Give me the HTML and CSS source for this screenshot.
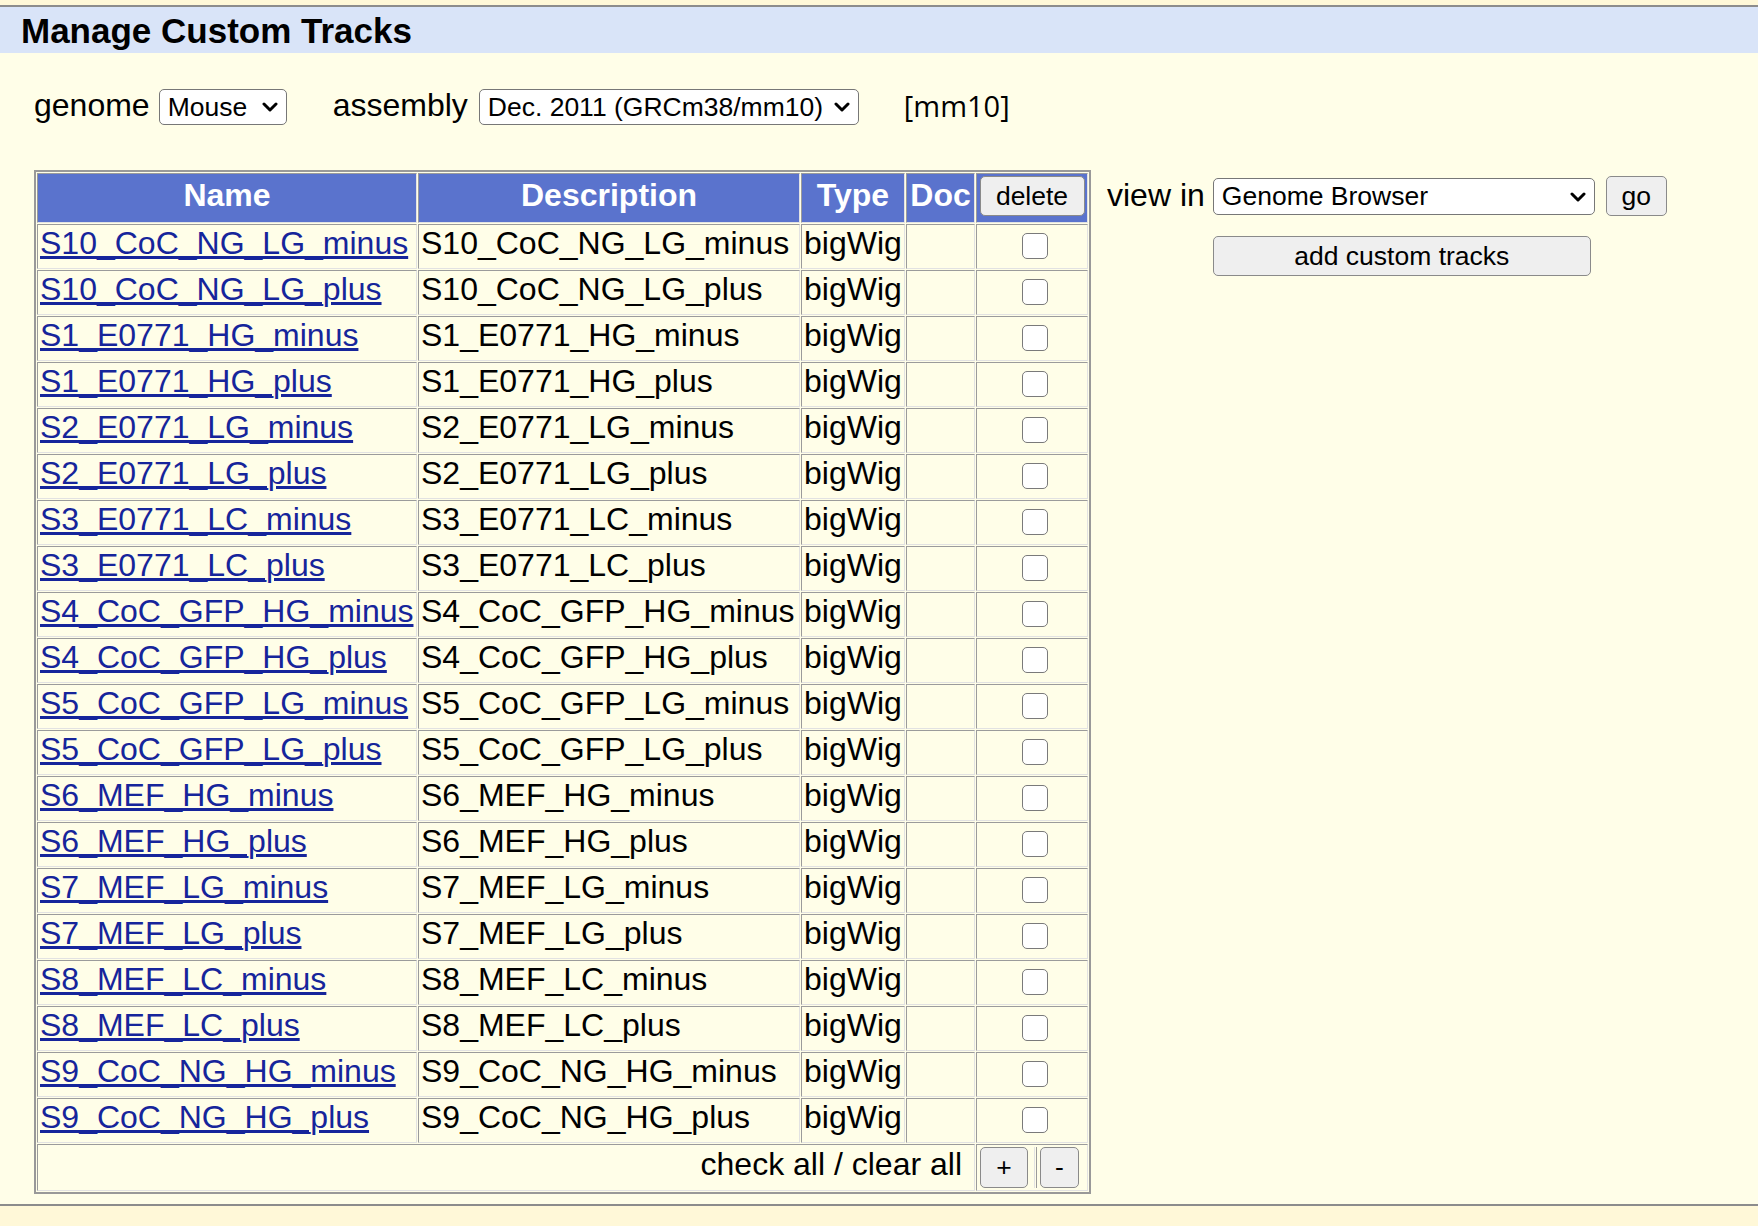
FILE: index.html
```html
<!DOCTYPE html>
<html>
<head>
<meta charset="utf-8">
<title>Manage Custom Tracks</title>
<link rel="stylesheet" href="styles.css">
</head>
<body>
<div class="topstrip"></div>
<div class="titlebar">Manage Custom Tracks</div>
<div class="asm-row">
  <span class="lbl">genome</span>
  <span class="sel sel-genome"><select><option>Mouse</option></select><svg class="chev" viewBox="0 0 16 10"><path d="M2 2 L8 8 L14 2"/></svg></span>
  <span class="lbl lbl-asm">assembly</span>
  <span class="sel sel-asm"><select><option>Dec. 2011 (GRCm38/mm10)</option></select><svg class="chev" viewBox="0 0 16 10"><path d="M2 2 L8 8 L14 2"/></svg></span>
  <span class="lbl db">[mm10]</span>
</div>
<div class="main">
  <table class="tracks">
    <thead>
      <tr>
        <th class="c-name">Name</th>
        <th class="c-desc">Description</th>
        <th class="c-type">Type</th>
        <th class="c-doc">Doc</th>
        <th class="c-del"><button class="btn del">delete</button></th>
      </tr>
    </thead>
    <tbody id="rows">
      <tr><td><a href="#">S10_CoC_NG_LG_minus</a></td><td>S10_CoC_NG_LG_minus</td><td>bigWig</td><td></td><td class="cb"><input type="checkbox"></td></tr>
      <tr><td><a href="#">S10_CoC_NG_LG_plus</a></td><td>S10_CoC_NG_LG_plus</td><td>bigWig</td><td></td><td class="cb"><input type="checkbox"></td></tr>
      <tr><td><a href="#">S1_E0771_HG_minus</a></td><td>S1_E0771_HG_minus</td><td>bigWig</td><td></td><td class="cb"><input type="checkbox"></td></tr>
      <tr><td><a href="#">S1_E0771_HG_plus</a></td><td>S1_E0771_HG_plus</td><td>bigWig</td><td></td><td class="cb"><input type="checkbox"></td></tr>
      <tr><td><a href="#">S2_E0771_LG_minus</a></td><td>S2_E0771_LG_minus</td><td>bigWig</td><td></td><td class="cb"><input type="checkbox"></td></tr>
      <tr><td><a href="#">S2_E0771_LG_plus</a></td><td>S2_E0771_LG_plus</td><td>bigWig</td><td></td><td class="cb"><input type="checkbox"></td></tr>
      <tr><td><a href="#">S3_E0771_LC_minus</a></td><td>S3_E0771_LC_minus</td><td>bigWig</td><td></td><td class="cb"><input type="checkbox"></td></tr>
      <tr><td><a href="#">S3_E0771_LC_plus</a></td><td>S3_E0771_LC_plus</td><td>bigWig</td><td></td><td class="cb"><input type="checkbox"></td></tr>
      <tr><td><a href="#">S4_CoC_GFP_HG_minus</a></td><td>S4_CoC_GFP_HG_minus</td><td>bigWig</td><td></td><td class="cb"><input type="checkbox"></td></tr>
      <tr><td><a href="#">S4_CoC_GFP_HG_plus</a></td><td>S4_CoC_GFP_HG_plus</td><td>bigWig</td><td></td><td class="cb"><input type="checkbox"></td></tr>
      <tr><td><a href="#">S5_CoC_GFP_LG_minus</a></td><td>S5_CoC_GFP_LG_minus</td><td>bigWig</td><td></td><td class="cb"><input type="checkbox"></td></tr>
      <tr><td><a href="#">S5_CoC_GFP_LG_plus</a></td><td>S5_CoC_GFP_LG_plus</td><td>bigWig</td><td></td><td class="cb"><input type="checkbox"></td></tr>
      <tr><td><a href="#">S6_MEF_HG_minus</a></td><td>S6_MEF_HG_minus</td><td>bigWig</td><td></td><td class="cb"><input type="checkbox"></td></tr>
      <tr><td><a href="#">S6_MEF_HG_plus</a></td><td>S6_MEF_HG_plus</td><td>bigWig</td><td></td><td class="cb"><input type="checkbox"></td></tr>
      <tr><td><a href="#">S7_MEF_LG_minus</a></td><td>S7_MEF_LG_minus</td><td>bigWig</td><td></td><td class="cb"><input type="checkbox"></td></tr>
      <tr><td><a href="#">S7_MEF_LG_plus</a></td><td>S7_MEF_LG_plus</td><td>bigWig</td><td></td><td class="cb"><input type="checkbox"></td></tr>
      <tr><td><a href="#">S8_MEF_LC_minus</a></td><td>S8_MEF_LC_minus</td><td>bigWig</td><td></td><td class="cb"><input type="checkbox"></td></tr>
      <tr><td><a href="#">S8_MEF_LC_plus</a></td><td>S8_MEF_LC_plus</td><td>bigWig</td><td></td><td class="cb"><input type="checkbox"></td></tr>
      <tr><td><a href="#">S9_CoC_NG_HG_minus</a></td><td>S9_CoC_NG_HG_minus</td><td>bigWig</td><td></td><td class="cb"><input type="checkbox"></td></tr>
      <tr><td><a href="#">S9_CoC_NG_HG_plus</a></td><td>S9_CoC_NG_HG_plus</td><td>bigWig</td><td></td><td class="cb"><input type="checkbox"></td></tr>
      <tr class="foot">
        <td colspan="4" class="checkall">check all / clear all</td>
        <td class="pm-cell"><div class="pm"><span class="pm-a"><button class="btn plus">+</button></span><span class="pm-b"><button class="btn minus">-</button></span></div></td>
      </tr>
    </tbody>
  </table>
  <div class="side">
    <span class="lbl view-lbl">view in</span>
    <div class="view-ctrls">
      <span class="sel sel-view"><select><option>Genome Browser</option></select><svg class="chev" viewBox="0 0 16 10"><path d="M2 2 L8 8 L14 2"/></svg></span>
      <button class="btn go">go</button>
    </div>
    <span></span>
    <button class="btn add">add custom tracks</button>
  </div>
</div>
<div class="bottom"></div>
</body>
</html>
```

FILE: styles.css
```css
html, body {
  margin: 0;
  padding: 0;
}
body {
  background: #fffee8;
  font-family: "Liberation Sans", Arial, sans-serif;
  font-size: 32px;
  color: #000;
  width: 1758px;
  height: 1226px;
  overflow: hidden;
  position: relative;
}
.topstrip {
  height: 5px;
  background: #fff8d8;
  border-bottom: 2px solid #8c8c8c;
}
.titlebar {
  background: #d9e4f8;
  height: 45px;
  padding: 1px 0 0 21px;
  font-weight: bold;
  font-size: 35px;
  line-height: 45px;
}
.asm-row {
  display: flex;
  align-items: center;
  height: 36px;
  margin-top: 36px;
  padding-left: 34px;
}
.lbl {
  line-height: 37px;
  margin-bottom: 4px;
}
.sel {
  position: relative;
  display: inline-block;
  margin-left: 9px;
}
.sel select {
  appearance: none;
  -webkit-appearance: none;
  display: block;
  box-sizing: border-box;
  height: 36px;
  margin: 0;
  padding: 0 0 0 8px;
  border: 1.5px solid #777;
  border-radius: 5px;
  background: #fff;
  font-family: "Liberation Sans", Arial, sans-serif;
  font-size: 26.5px;
  color: #000;
}
.chev {
  position: absolute;
  right: 9px;
  top: 13px;
  width: 16px;
  height: 10px;
  fill: none;
  stroke: #000;
  stroke-width: 3;
  stroke-linecap: round;
  stroke-linejoin: round;
  pointer-events: none;
}
.sel-genome select { width: 128px; }
.lbl-asm { margin-left: 46px; }
.sel-asm { margin-left: 11px; }
.sel-asm select { width: 380px; }
.db {
  margin-left: 45px;
  font-family: "Open Sans", "Noto Sans", sans-serif;
  font-size: 29px;
}
.main {
  display: flex;
  align-items: flex-start;
  margin-top: 45px;
  padding-left: 34px;
}
.tracks {
  border: 2px solid #999;
  border-spacing: 1px;
  background: #fffee8;
}
.tracks th, .tracks td {
  border: 1px solid;
  border-color: #9b9b9b #e2e2e2 #e2e2e2 #9b9b9b;
  padding: 0 2px 6px 2px;
  line-height: 37px;
  white-space: nowrap;
}
.tracks th {
  background: #5a73cd;
  color: #fff;
  font-weight: bold;
  text-align: center;
  padding: 0 2px 6px 2px;
}
.c-name { width: 374px; }
.c-desc { width: 376px; }
.c-type { width: 98px; }
.c-doc { width: 63px; }
.c-del { width: 106px; }
.tracks a {
  color: #16259b;
  text-decoration: underline;
}
.btn {
  font-family: "Liberation Sans", Arial, sans-serif;
  font-size: 26.5px;
  color: #000;
  background: #efefef;
  border: 1.5px solid #8a8a8a;
  border-radius: 5px;
  box-sizing: border-box;
  margin: 0;
  padding: 0;
}
.del {
  width: 105px;
  height: 40px;
  display: block;
  margin: 2px auto 0;
}
.cb {
  text-align: center;
}
.cb input {
  appearance: none;
  -webkit-appearance: none;
  width: 26px;
  height: 26px;
  margin: 8px 0 0 5px;
  vertical-align: top;
  background: #fff;
  border: 1.5px solid #7a7a7a;
  border-radius: 5px;
  box-sizing: border-box;
}
.checkall {
  text-align: right;
  padding-right: 12px !important;
}
.pm-cell {
  padding: 2px 2px 2px 2px !important;
}
.pm {
  display: flex;
  align-items: center;
}
.pm-a {
  padding: 0 6px 0 1px;
  border-right: 1px solid #e2e2e2;
}
.pm-b {
  padding: 0 0 0 3px;
  border-left: 1px solid #9b9b9b;
  margin-left: 1px;
}
.plus { width: 48px; height: 41px; display: block; }
.minus { width: 39px; height: 41px; display: block; }
.side {
  display: grid;
  grid-template-columns: auto auto;
  column-gap: 8px;
  row-gap: 20px;
  align-items: center;
  margin-left: 16px;
  margin-top: 6px;
}
.side .lbl { margin-bottom: 2px; }
.view-ctrls {
  display: flex;
  align-items: center;
}
.view-ctrls .sel { margin-left: 0; }
.sel-view select { width: 382px; height: 37px; }
.sel-view .chev { top: 14px; }
.go {
  width: 61px;
  height: 40px;
  margin-left: 11px;
}
.add {
  width: 378px;
  height: 40px;
}
.bottom {
  position: absolute;
  left: 0;
  right: 0;
  top: 1204px;
  bottom: 0;
  background: #fff8d8;
  border-top: 2px solid #8c8c8c;
}
```
